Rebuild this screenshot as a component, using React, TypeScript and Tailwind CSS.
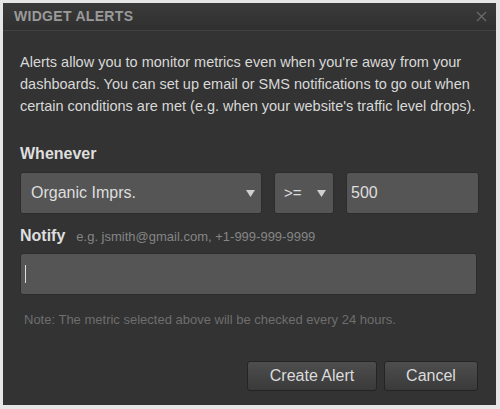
import React from "react";

const font = { fontFamily: '"Liberation Sans", Arial, sans-serif' };

const Caret = () => (
  <svg width="9" height="7" viewBox="0 0 9 7" className="shrink-0">
    <path d="M0 0 L9 0 L4.5 7 Z" fill="#d0d0d0" />
  </svg>
);

const App: React.FC = () => {
  return (
    <div className="w-[500px] h-[409px] bg-[#e6e6e6] pt-[3px] pl-[3px] pr-[4px] pb-[4px]" style={font}>
      <div className="w-[493px] h-[402px] bg-[#333333] flex flex-col">
        {/* Header */}
        <div className="h-[28px] shrink-0 flex items-center justify-between pl-[11px] pr-[9px] bg-gradient-to-b from-[#3a3a3a] to-[#303030] border-b border-dotted border-[#4a4a4a]">
          <span className="text-[14px] font-bold text-[#9a9a9a] tracking-[0.3px]">WIDGET ALERTS</span>
          <svg width="11" height="11" viewBox="0 0 11 11">
            <path d="M1 1 L10 10 M10 1 L1 10" stroke="#6a6a6a" strokeWidth="1.3" />
          </svg>
        </div>

        {/* Body */}
        <div className="flex flex-col px-[17px]">
          <p className="mt-[20px] w-[462px] text-[14.5px] leading-[22px] text-[#d8d8d8]">
            Alerts allow you to monitor metrics even when you're away from your dashboards. You can set up email or SMS notifications to go out when certain conditions are met (e.g. when your website's traffic level drops).
          </p>

          <div className="mt-[25px] text-[16px] font-bold text-[#dedede]">Whenever</div>

          <div className="mt-[6px] flex gap-[12px]">
            <div className="w-[242px] h-[42px] rounded-[3px] bg-[#555555] border border-[#2c2c2c] flex items-center justify-between pl-[10px] pr-[6px]">
              <span className="text-[16px] text-[#dedede]">Organic Imprs.</span>
              <Caret />
            </div>
            <div className="w-[60px] h-[42px] rounded-[3px] bg-[#555555] border border-[#2c2c2c] flex items-center justify-between pl-[9px] pr-[7px]">
              <span className="text-[15px] text-[#dedede]">&gt;=</span>
              <Caret />
            </div>
            <div className="w-[133px] h-[42px] rounded-[3px] bg-[#555555] border border-[#2c2c2c] flex items-center pl-[4px]">
              <span className="text-[16px] text-[#dedede]">500</span>
            </div>
          </div>

          <div className="mt-[10px] flex items-baseline gap-[11px]">
            <span className="text-[16px] font-bold text-[#dedede]">Notify</span>
            <span className="text-[13px] text-[#858585]">e.g. jsmith@gmail.com, +1-999-999-9999</span>
          </div>

          <div className="mt-[5px] w-[457px] h-[42px] rounded-[3px] bg-[#555555] border border-[#2c2c2c] flex items-center pl-[4px]">
            <div className="w-px h-[18px] bg-[#dddddd]" />
          </div>

          <div className="mt-[15px] pl-[4px] text-[13px] text-[#6e6e6e]">
            Note: The metric selected above will be checked every 24 hours.
          </div>

          <div className="mt-[31px] flex justify-end gap-[7px] pr-[1px]">
            <button className="w-[130px] h-[30px] rounded-[3px] border border-[#242424] bg-gradient-to-b from-[#4e4e4e] to-[#3a3a3a] text-[16px] text-[#dcdcdc]">
              Create Alert
            </button>
            <button className="w-[94px] h-[30px] rounded-[3px] border border-[#242424] bg-gradient-to-b from-[#4e4e4e] to-[#3a3a3a] text-[16px] text-[#dcdcdc]">
              Cancel
            </button>
          </div>
        </div>
      </div>
    </div>
  );
};

export default App;
